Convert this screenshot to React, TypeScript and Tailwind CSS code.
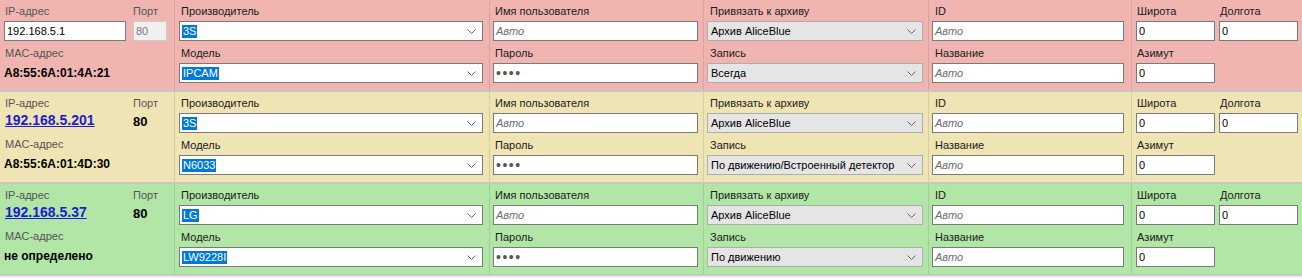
import React from 'react';

type Cam = {
  bg: string;
  sep: string;
  ip: string;
  editable: boolean;
  mac: string;
  vendor: string;
  model: string;
  record: string;
};

const cams: Cam[] = [
  {
    bg: 'bg-[#f0b5b0]',
    sep: 'border-[#d9a3a0]',
    ip: '192.168.5.1',
    editable: true,
    mac: 'A8:55:6A:01:4A:21',
    vendor: '3S',
    model: 'IPCAM',
    record: 'Всегда',
  },
  {
    bg: 'bg-[#efe4b4]',
    sep: 'border-[#d6cda3]',
    ip: '192.168.5.201',
    editable: false,
    mac: 'A8:55:6A:01:4D:30',
    vendor: '3S',
    model: 'N6033',
    record: 'По движению/Встроенный детектор',
  },
  {
    bg: 'bg-[#b1e6a7]',
    sep: 'border-[#a0cf97]',
    ip: '192.168.5.37',
    editable: false,
    mac: 'не определено',
    vendor: 'LG',
    model: 'LW9228I',
    record: 'По движению',
  },
];

const Chevron = () => (
  <svg width="9" height="5" viewBox="0 0 9 5" className="shrink-0">
    <polyline points="0.5,0.5 4.5,4.5 8.5,0.5" fill="none" stroke="#606060" strokeWidth="1" />
  </svg>
);

const Label = ({ children, muted }: { children: React.ReactNode; muted?: boolean }) => (
  <div className={`h-[15px] leading-[15px] text-[11px] ${muted ? 'text-[#555]' : 'text-[#1b1b1b]'}`}>{children}</div>
);

const TextBox = ({ children, className = '' }: { children?: React.ReactNode; className?: string }) => (
  <div className={`h-[20px] border border-[#7a7a7a] bg-white flex items-center px-[2px] text-[11px] text-black ${className}`}>
    {children}
  </div>
);

const Auto = () => <span className="italic text-[#6d6d6d]">Авто</span>;

const EditCombo = ({ value }: { value: string }) => (
  <div className="h-[20px] border border-[#7a7a7a] bg-white flex items-center pl-[2px] pr-[6px] text-[11px]">
    <span className="bg-[#0078d7] text-white leading-[13px] px-[1px]">{value}</span>
    <span className="flex-1" />
    <Chevron />
  </div>
);

const ListCombo = ({ value }: { value: string }) => (
  <div className="h-[20px] border border-[#adadad] bg-[#e5e5e5] flex items-center pl-[3px] pr-[6px] text-[11px] text-black">
    <span className="flex-1 truncate">{value}</span>
    <Chevron />
  </div>
);

const Row = ({ cam }: { cam: Cam }) => (
  <div className={`${cam.bg} h-[92px] border-b-2 border-[#c6c6c6] grid grid-cols-[174px_315px_214px_225px_203px_1fr]`}>
    {/* адрес */}
    <div className="pl-[4px] pt-[4px]">
      <div className="flex">
        <div className="w-[129px] pl-[1px]">
          <Label muted>IP-адрес</Label>
        </div>
        <Label muted>Порт</Label>
      </div>
      <div className="flex mt-[2px]">
        {cam.editable ? (
          <TextBox className="w-[122px]">192.168.5.1</TextBox>
        ) : (
          <div className="w-[122px] h-[20px] flex items-center pl-[1px] -mt-[3px]">
            <span className="font-bold text-[14px] text-[#1c1cd0] underline">{cam.ip}</span>
          </div>
        )}
        <div className="w-[7px]" />
        {cam.editable ? (
          <div className="w-[34px] h-[20px] border border-[#cccccc] bg-[#f0f0f0] flex items-center px-[2px] text-[11px] text-[#7a7a7a]">
            80
          </div>
        ) : (
          <div className="h-[20px] flex items-center font-bold text-[13px] text-black -mt-[1px]">80</div>
        )}
      </div>
      <div className="mt-[5px] pl-[1px]">
        <Label muted>MAC-адрес</Label>
      </div>
      <div className="mt-[4px] font-bold text-[12px] leading-[16px] text-black">{cam.mac}</div>
    </div>

    {/* производитель */}
    <div className={`border-l ${cam.sep} pl-[4px] pr-[6px] pt-[4px]`}>
      <div className="pl-[2px]">
        <Label>Производитель</Label>
      </div>
      <div className="mt-[2px]">
        <EditCombo value={cam.vendor} />
      </div>
      <div className="mt-[5px] pl-[2px]">
        <Label>Модель</Label>
      </div>
      <div className="mt-[2px]">
        <EditCombo value={cam.model} />
      </div>
    </div>

    {/* логин */}
    <div className={`border-l ${cam.sep} pl-[3px] pr-[5px] pt-[4px]`}>
      <div className="pl-[2px]">
        <Label>Имя пользователя</Label>
      </div>
      <div className="mt-[2px]">
        <TextBox>
          <Auto />
        </TextBox>
      </div>
      <div className="mt-[5px] pl-[2px]">
        <Label>Пароль</Label>
      </div>
      <div className="mt-[2px]">
        <TextBox>
          <span className="text-[14px] tracking-[1.5px] text-[#555] leading-none">••••</span>
        </TextBox>
      </div>
    </div>

    {/* архив */}
    <div className={`border-l ${cam.sep} pl-[3px] pr-[5px] pt-[4px]`}>
      <div className="pl-[3px]">
        <Label>Привязать к архиву</Label>
      </div>
      <div className="mt-[2px]">
        <ListCombo value="Архив AliceBlue" />
      </div>
      <div className="mt-[5px] pl-[3px]">
        <Label>Запись</Label>
      </div>
      <div className="mt-[2px]">
        <ListCombo value={cam.record} />
      </div>
    </div>

    {/* название */}
    <div className={`border-l ${cam.sep} pl-[3px] pr-[7px] pt-[4px]`}>
      <div className="pl-[3px]">
        <Label>ID</Label>
      </div>
      <div className="mt-[2px]">
        <TextBox>
          <Auto />
        </TextBox>
      </div>
      <div className="mt-[5px] pl-[3px]">
        <Label>Название</Label>
      </div>
      <div className="mt-[2px]">
        <TextBox>
          <Auto />
        </TextBox>
      </div>
    </div>

    {/* координаты */}
    <div className={`border-l ${cam.sep} pl-[4px] pt-[4px]`}>
      <div className="flex">
        <div className="w-[83px] pl-[1px]">
          <Label>Широта</Label>
        </div>
        <div className="pl-[1px]">
          <Label>Долгота</Label>
        </div>
      </div>
      <div className="flex gap-[4px] mt-[2px]">
        <TextBox className="w-[79px]">0</TextBox>
        <TextBox className="w-[79px]">0</TextBox>
      </div>
      <div className="mt-[5px] pl-[1px]">
        <Label>Азимут</Label>
      </div>
      <div className="mt-[2px]">
        <TextBox className="w-[79px]">0</TextBox>
      </div>
    </div>
  </div>
);

export default function App() {
  return (
    <div className="w-[1302px] h-[278px] bg-[#f0f0f0] overflow-hidden font-['Liberation_Sans',Arial,sans-serif]">
      {cams.map((cam) => (
        <Row key={cam.ip} cam={cam} />
      ))}
    </div>
  );
}
